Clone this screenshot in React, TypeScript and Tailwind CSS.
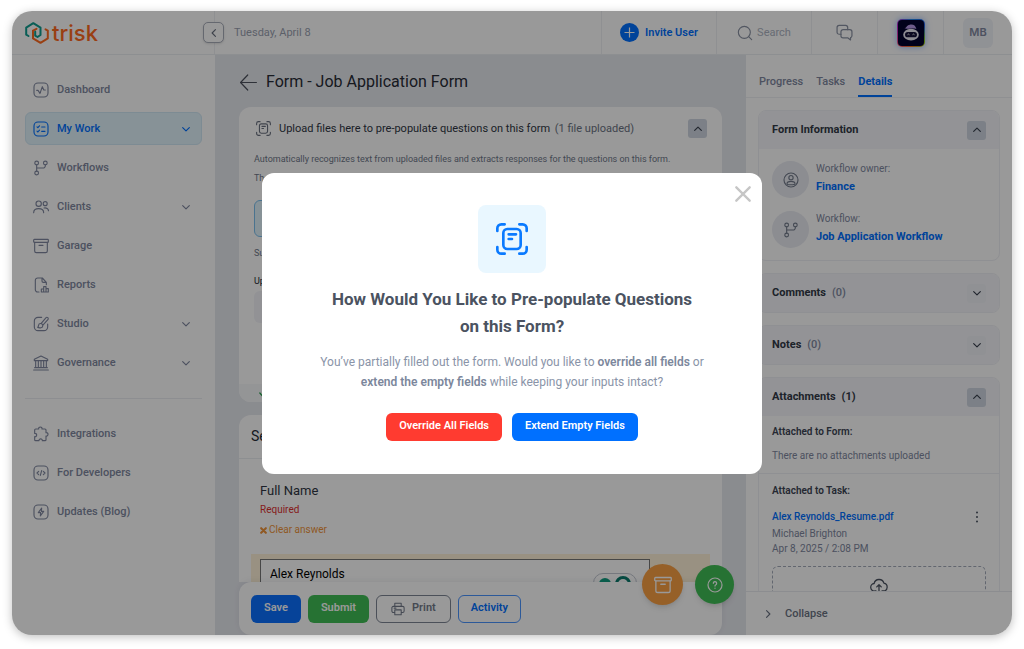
import React from "react";

type IconProps = { className?: string };

function Svg({ className = "", width = 1.7, children }: { className?: string; width?: number; children: React.ReactNode }) {
  return (
    <svg viewBox="0 0 24 24" fill="none" stroke="currentColor" strokeWidth={width} strokeLinecap="round" strokeLinejoin="round" className={className} aria-hidden="true">
      {children}
    </svg>
  );
}

const Frame = () => <rect x="1.5" y="1.5" width="21" height="21" rx="6" />;

const DashboardIcon = ({ className }: IconProps) => (
  <Svg className={className}><Frame /><path d="M5.5 12.500h2L10.500 17l3.500-10 2.200 5h2.300" /></Svg>
);
const WorkIcon = ({ className }: IconProps) => (
  <Svg className={className}><Frame /><path d="M6 8.8l1.3 1.2 2.4-2.8M6 15.3l1.3 1.2 2.4-2.8M13 9h5M13 15.5h5" /></Svg>
);
const BranchIcon = ({ className }: IconProps) => (
  <Svg className={className}>
    <circle cx="5.5" cy="4.5" r="2.8" /><circle cx="5.5" cy="19.5" r="2.8" /><circle cx="18.5" cy="4.5" r="2.8" />
    <path d="M5.5 7.3v9.4M18.5 7.3v1.2a3.5 3.5 0 0 1-3.5 3.5H5.5" />
  </Svg>
);
const ClientsIcon = ({ className }: IconProps) => (
  <Svg className={className}>
    <circle cx="8.5" cy="7" r="4" /><circle cx="18.3" cy="7" r="3" />
    <path d="M1 20.5c0-4 2.600-6 7.500-6s7.500 2 7.500 6M16.500 13.500c4-.6 6.500 1 6.700 4" />
  </Svg>
);
const BoxIcon = ({ className }: IconProps) => (
  <Svg className={className}>
    <rect x="1" y="2" width="22" height="4.500" rx="1" /><path d="M2.500 6.500v13a2.500 2.500 0 0 0 2.500 2.500h14a2.500 2.500 0 0 0 2.500-2.500v-13M9 11h6" />
  </Svg>
);
const ReportIcon = ({ className }: IconProps) => (
  <Svg className={className}>
    <path d="M9 22.500H7A3.500 3.500 0 0 1 3.500 19V5A3.500 3.500 0 0 1 7 1.500h7L20 8v3.500M13.500 1.500V6a2 2 0 0 0 2 2H20M12.500 22.500v-4.500h3.500v4.500M16 22.500v-8h3.500v8M19.500 22.500v-5H23v5zM12.500 22.500H23" />
  </Svg>
);
const StudioIcon = ({ className }: IconProps) => (
  <Svg className={className}>
    <path d="M13 2H7.500A5.500 5.500 0 0 0 2 7.500v9A5.500 5.500 0 0 0 7.500 22h9a5.500 5.500 0 0 0 5.500-5.500V12" />
    <path d="M12 11.500l7.300-8.800a2 2 0 0 1 3 2.700L14.500 14M7 17c1.200-.6 1-1.700 1.300-3a3.200 3.200 0 1 1 3.700 3.600c-1.500.4-3.500.3-5-.6z" />
  </Svg>
);
const BankIcon = ({ className }: IconProps) => (
  <Svg className={className}>
    <path d="M2 8.500V6.500L12 1.500l10 5v2zM4 8.500v10.500M8 8.500v10.500M12 8.500v10.500M16 8.500v10.500M20 8.500v10.500M2.500 19h19M1 22.500h22" />
  </Svg>
);
const PuzzleIcon = ({ className }: IconProps) => (
  <Svg className={className}>
    <path d="M4 4.500h4.500c-.8-4 5.800-4 5 0h4.500a1.500 1.500 0 0 1 1.500 1.500v4c4-1 4 6 0 5v5.500a1.500 1.500 0 0 1-1.500 1.500h-4c.3-3.500-5.300-3.500-5 0H4a1.500 1.500 0 0 1-1.500-1.500V16c4 .6 4-5.500 0-5V6A1.500 1.500 0 0 1 4 4.500z" />
  </Svg>
);
const CodeIcon = ({ className }: IconProps) => (
  <Svg className={className}><Frame /><path d="M8.500 9.500L6 12l2.500 2.500M15.500 9.500L18 12l-2.500 2.500M13 8.500l-2 7" /></Svg>
);
const BoltIcon = ({ className }: IconProps) => (
  <Svg className={className}><Frame /><path d="M13 6l-5 7h3.500L11 18l5-7h-3.500z" /></Svg>
);
const ScanIcon = ({ className, width = 2 }: IconProps & { width?: number }) => (
  <Svg className={className} width={width}>
    <path d="M1 6V4a3 3 0 0 1 3-3h2.500M17.500 1H20a3 3 0 0 1 3 3v2M23 18v2a3 3 0 0 1-3 3h-2.500M6.500 23H4a3 3 0 0 1-3-3v-2" />
    <rect x="5.500" y="4.500" width="13" height="15" rx="3" /><path d="M9.500 8.500h5.500M9.500 12h2.500" />
  </Svg>
);
const Chevron = ({ className = "" }: IconProps) => (
  <Svg className={className} width={2.800}><path d="M4 8.500l8 8 8-8" /></Svg>
);
const PersonIcon = ({ className }: IconProps) => (
  <Svg className={className}><circle cx="12" cy="12" r="10.500" /><circle cx="12" cy="8.500" r="3.200" /><path d="M6 17.500c0-2.500 2.500-3.500 6-3.500s6 1 6 3.500-12 2-12 0z" /></Svg>
);

function Logo() {
  return (
    <a href="#home" className="flex items-center gap-[3px] text-[#ff6a1f]">
      <svg viewBox="0 0 24 22" fill="none" strokeWidth="2" strokeLinecap="round" strokeLinejoin="round" className="h-[22px] w-6" aria-hidden="true">
        <path d="M3.500 14L1.200 12.700V5.600L8.300 1.200l7.200 4.400v7.400l-3 2-2.300-1.400V9.500" stroke="#0f9d8f" />
        <path d="M11.500 6.800L8 8.600v7.800l7.500 4.400 7.300-4.400V8.600L20.500 7.300" stroke="currentColor" />
      </svg>
      <span className="font-[Inter] text-[22px] leading-6 font-medium">trisk</span>
    </a>
  );
}

type NavEntry = { label: string; Icon: React.ComponentType<IconProps>; expandable?: boolean; active?: boolean };

const mainNav: NavEntry[] = [
  { label: "Dashboard", Icon: DashboardIcon },
  { label: "My Work", Icon: WorkIcon, expandable: true, active: true },
  { label: "Workflows", Icon: BranchIcon },
  { label: "Clients", Icon: ClientsIcon, expandable: true },
  { label: "Garage", Icon: BoxIcon },
  { label: "Reports", Icon: ReportIcon },
  { label: "Studio", Icon: StudioIcon, expandable: true },
  { label: "Governance", Icon: BankIcon, expandable: true },
];
const extraNav: NavEntry[] = [
  { label: "Integrations", Icon: PuzzleIcon },
  { label: "For Developers", Icon: CodeIcon },
  { label: "Updates (Blog)", Icon: BoltIcon },
];

function NavList({ items }: { items: NavEntry[] }) {
  return (
    <ul className="flex flex-col gap-1.5">
      {items.map(({ label, Icon, expandable, active }) => (
        <li key={label}>
          <a
            href="#nav"
            className={
              active
                ? "flex h-[33px] items-center gap-2 rounded-md border border-[#d0e8f5] bg-[#e2f3fc] px-[7px] text-[#0070ff]"
                : "flex h-[33px] items-center gap-2 rounded-md border border-transparent px-[7px] text-[#8088a0]"
            }
          >
            <Icon className="size-4" />
            <span className="flex-1 pt-px text-[11px] font-medium">{label}</span>
            {expandable && <Chevron className="mr-[3px] size-2.5" />}
          </a>
        </li>
      ))}
    </ul>
  );
}

function Sidebar() {
  return (
    <nav className="w-[203px] shrink-0 px-[13px] pt-[18px]">
      <NavList items={mainNav} />
      <hr className="mt-[19px] mb-[18px] border-[#ebedf2]" />
      <NavList items={extraNav} />
    </nav>
  );
}

function Header() {
  const cell = "flex h-full items-center justify-center border-l border-[#eff0f4]";
  return (
    <header className="flex h-[44px] shrink-0 items-center border-b border-[#eceef2]">
      <div className="flex h-full w-[203px] shrink-0 items-center border-r border-[#eff0f4] pl-[13px]">
        <Logo />
        <button aria-label="Collapse menu" className="relative -right-[10px] ml-auto flex size-[21px] shrink-0 items-center justify-center rounded-[5px] border border-[#a8adba] bg-white text-[#6b7280] shadow-sm">
          <Chevron className="size-2.5 rotate-90" />
        </button>
      </div>
      <span className="flex-1 pt-px pl-[19px] text-[11px] text-[#9aa1b0]">Tuesday, April 8</span>
      <button className={`${cell} w-[115px] gap-1.5 text-[#0070ff]`}>
        <svg viewBox="0 0 19 19" className="size-[19px]" aria-hidden="true">
          <circle cx="9.500" cy="9.500" r="9.500" fill="#0070ff" /><path d="M9.500 4.500v10M4.500 9.500h10" stroke="#fff" strokeWidth="1.200" />
        </svg>
        <span className="pt-px text-[11px] font-semibold">Invite User</span>
      </button>
      <button className={`${cell} w-[95px] gap-1 text-[#8a92a3]`}>
        <Svg className="size-4"><circle cx="11" cy="11" r="9" /><path d="M17.500 17.500L22 22" /></Svg>
        <span className="pt-px text-[11px] text-[#adb4c2]">Search</span>
      </button>
      <button aria-label="Messages" className={`${cell} w-[66px] text-[#8a92a3]`}>
        <Svg className="size-[17px]">
          <path d="M7 14.500H4.500a3 3 0 0 1-3-3V5a3 3 0 0 1 3-3h9a3 3 0 0 1 3 3v3" />
          <path d="M10 8h9.500a3 3 0 0 1 3 3v5.500a3 3 0 0 1-2 2.800V22.500l-4-3H10a3 3 0 0 1-3-3V11a3 3 0 0 1 3-3z" />
        </Svg>
      </button>
      <button aria-label="Assistant" className={`${cell} w-[66px]`}>
        <span className="flex size-7 items-center justify-center rounded-[5px] bg-[conic-gradient(#2389e8,#2563eb,#84cc16,#f97316,#ec4899,#c026d3,#2389e8)] p-px shadow-[0_0_6px_#4f8cff99]">
          <svg viewBox="0 0 24 24" className="size-full rounded-[4px] bg-[#03022e]" aria-hidden="true">
            <ellipse cx="12" cy="13.500" rx="7.200" ry="5.500" fill="#ece9f6" />
            <rect x="6.500" y="11" width="11" height="5" rx="2.500" fill="#15123a" />
            <path d="M8.800 13.600q.9-1.200 1.800 0M13.400 13.600q.9-1.200 1.800 0" stroke="#fff" strokeWidth=".8" fill="none" />
            <path d="M6 7.500C8.500 7 7.500 4.700 11 4.300c3.500-.4 5 .8 6 4-3-1-7 .3-11-.8z" fill="#b79ae8" />
          </svg>
        </span>
      </button>
      <button className={`${cell} w-[69px]`}>
        <span className="flex size-[30px] items-center justify-center rounded-md bg-[#f1f3f8] font-[Inter] text-[11px] font-semibold text-[#8088a0]">MB</span>
      </button>
    </header>
  );
}

function Toggle({ open = false, label }: { open?: boolean; label: string }) {
  return (
    <button
      aria-label={label}
      aria-expanded={open}
      className={
        open
          ? "flex size-[19px] shrink-0 items-center justify-center rounded-[3px] bg-[#cfd6e1] text-[#39414f]"
          : "flex size-[19px] shrink-0 items-center justify-center rounded-[3px] bg-[#f1f2f7] text-[#39414f]"
      }
    >
      <Chevron className={open ? "size-2.5 rotate-180" : "size-2.5"} />
    </button>
  );
}

function FormArea() {
  return (
    <main className="relative flex min-w-0 flex-1 flex-col bg-[#e7e9ef] px-6">
      <div className="flex min-h-0 flex-1 flex-col overflow-hidden">
        <div className="flex h-[52px] shrink-0 items-center gap-2 pt-0.5">
          <Svg className="size-[19px] text-[#4d535e]" width={1.500}><path d="M22 12H2M11 2.500L2 12l9 9.500" /></Svg>
          <h1 className="text-[16px] text-[#272c36]">Form - Job Application Form</h1>
        </div>

        <section className="flex h-[295px] shrink-0 flex-col overflow-hidden rounded-xl bg-white">
          <div className="flex items-center gap-2 pt-3 pr-[15px] pl-[17px]">
            <ScanIcon className="size-[15px] text-[#6b7280]" width={1.800} />
            <h2 className="flex-1 pt-px text-[11px] text-[#2f3643]">
              Upload files here to pre-populate questions on this form{" "}
              <span className="ml-0.5 text-[#6b7383]">(1 file uploaded)</span>
            </h2>
            <Toggle open label="Upload section" />
          </div>
          <div className="flex-1 px-[15px] pt-3 text-[9px] leading-[19px] text-[#6f788a]">
            <p className="whitespace-nowrap">Automatically recognizes text from uploaded files and extracts responses for the questions on this form.</p>
            <p>The</p>
            <div className="mt-3 h-[37px] rounded-md border border-[#7cc0ee] bg-[#e2f3fc]" />
            <p className="mt-[7px]">Supported</p>
            <p className="mt-[9px] text-[#272c36]">Uploaded</p>
            <div className="h-8 rounded-md bg-[#f3f4f8]" />
          </div>
          <div className="flex h-[18px] items-center bg-[#f7f8fa] pl-5 text-[#22a04a]">
            <Svg className="size-2.5" width={3}><path d="M2 12l7 8L22 5" /></Svg>
          </div>
        </section>

        <section className="mt-[13px] flex-1 overflow-hidden rounded-t-xl bg-white">
          <h2 className="flex h-[44px] items-center border-b border-[#eceef2] px-3 text-[14px] text-[#272c36]">Section</h2>
          <div className="px-[21px] pt-[22px]">
            <label htmlFor="full-name" className="block text-[13px] leading-5 text-[#2f3643]">Full Name</label>
            <p className="text-[10px] leading-[17px] text-[#e03131]">Required</p>
            <button className="mt-1 flex items-center gap-0.5 text-[10px] leading-4 text-[#f0943a]">
              <Svg className="size-[7px]" width={7}><path d="M4 4l16 16M20 4L4 20" /></Svg>
              Clear answer
            </button>
          </div>
          <div className="mx-3 mt-4 bg-[#fff2d9] px-[9px] pt-[5px] pb-5">
            <div className="mr-[51px] flex h-[40px] items-start border border-[#777] bg-white pt-1 pr-3 pl-[9px]">
              <input id="full-name" defaultValue="Alex Reynolds" className="h-5 min-w-0 flex-1 bg-transparent text-[12px] text-black outline-none" />
              <span className="mt-[9px] flex h-5 items-start gap-1 rounded-full border border-[#c3c8d2] bg-white px-[5px] pt-1">
                <span className="size-3 rounded-full bg-[#0f9d7f]" />
                <span className="-mt-0.5 size-4 rounded-full border-[3px] border-[#0b7d6e]" />
              </span>
            </div>
          </div>
        </section>
      </div>

      <div className="z-0 flex h-[53px] shrink-0 items-center gap-[7px] rounded-xl bg-white px-3 text-[11px] font-semibold shadow-[0_-1px_6px_rgba(40,50,80,0.08)]">
        <button className="h-7 rounded-md bg-[#0a70ff] px-[13px] text-white">Save</button>
        <button className="h-7 rounded-md bg-[#40bf56] px-[13px] text-white">Submit</button>
        <button className="flex h-7 items-center gap-[7px] rounded-md border border-[#7d8594] px-[14px] text-[#737b8b]">
          <Svg className="size-[14px]" width={1.800}>
            <path d="M6.500 7.500V2h11v5.500M6 18H4a2.500 2.500 0 0 1-2.500-2.500v-5.500A2.500 2.500 0 0 1 4 7.500h16a2.500 2.500 0 0 1 2.500 2.500v5.500A2.500 2.500 0 0 1 20 18h-2M6.500 13.500h11V22h-11zM5.500 10.500h3" />
          </Svg>
          Print
        </button>
        <button className="h-7 rounded-md border border-[#4a94ff] px-3 text-[#0070ff]">Activity</button>
      </div>

      <div className="absolute right-3 bottom-[30px] z-10 flex items-center gap-3">
        <button aria-label="Open garage" className="flex size-[41px] items-center justify-center rounded-full bg-[#fba044] text-white shadow-md">
          <BoxIcon className="size-[18px]" />
        </button>
        <button aria-label="Help" className="flex size-[39px] items-center justify-center rounded-full bg-[#40bf56] text-white shadow-md">
          <Svg className="size-4" width={1.800}><circle cx="12" cy="12" r="10.500" /><path d="M9.500 9.500a2.500 2.500 0 1 1 3.800 2.100c-.9.500-1.300 1-1.300 2M12 16.800v.2" /></Svg>
        </button>
      </div>
    </main>
  );
}

function InfoRow({ Icon, caption, value }: { Icon: React.ComponentType<IconProps>; caption: string; value: string }) {
  return (
    <div className="flex h-[37px] items-center gap-[7px]">
      <span className="flex size-[37px] items-center justify-center rounded-full bg-[#e9ebf2] text-[#737b8b]"><Icon className="size-4" /></span>
      <div className="pb-1 leading-[18px]">
        <p className="text-[10px] text-[#8088a0]">{caption}</p>
        <a href="#owner" className="block text-[11px] font-bold text-[#0070ff]">{value}</a>
      </div>
    </div>
  );
}

function PanelHead({ title, count, strong, open }: { title: string; count?: string; strong?: boolean; open?: boolean }) {
  return (
    <h2 className="flex h-[38px] items-center justify-between bg-[#f5f6fa] px-[13px] text-[11px] font-bold text-[#323946]">
      <span>
        {title}
        {count && <span className={strong ? "ml-1.5" : "ml-1.5 font-medium text-[#8088a0]"}>{count}</span>}
      </span>
      <Toggle open={open} label={title} />
    </h2>
  );
}

function DetailsPanel() {
  const card = "shrink-0 overflow-hidden rounded-lg border border-[#eff0f5]";
  return (
    <aside className="flex w-[266px] shrink-0 flex-col bg-white">
      <div className="flex h-[43px] shrink-0 items-end gap-[13px] border-b border-[#eff0f4] pl-[13px] text-[11px] font-medium text-[#8088a0]">
        <button className="h-[31px] border-b-2 border-transparent pt-1">Progress</button>
        <button className="h-[31px] border-b-2 border-transparent pt-1">Tasks</button>
        <button className="h-[31px] border-b-2 border-[#0070ff] pt-1 font-bold text-[#0070ff]">Details</button>
      </div>
      <div className="flex min-h-0 flex-1 flex-col gap-3 overflow-hidden px-3 pt-3">
        <section className={card}>
          <PanelHead title="Form Information" open />
          <div className="flex flex-col gap-[13px] px-[13px] pt-3 pb-3">
            <InfoRow Icon={PersonIcon} caption="Workflow owner:" value="Finance" />
            <InfoRow Icon={BranchIcon} caption="Workflow:" value="Job Application Workflow" />
          </div>
        </section>
        <section className={card}><PanelHead title="Comments" count="(0)" /></section>
        <section className={card}><PanelHead title="Notes" count="(0)" /></section>
        <section className={card}>
          <PanelHead title="Attachments" count="(1)" strong open />
          <div className="px-[13px] pt-1.5 pb-[7px] text-[#8088a0]">
            <h3 className="text-[10px] leading-5 font-semibold text-[#3d4554]">Attached to Form:</h3>
            <p className="mt-1 text-[10px] leading-5">There are no attachments uploaded</p>
          </div>
          <div className="border-t border-[#eff0f5] px-[13px] pt-[7px] text-[#8088a0]">
            <h3 className="text-[10px] leading-5 font-semibold text-[#3d4554]">Attached to Task:</h3>
            <div className="mt-[7px] flex items-center justify-between">
              <a href="#file" className="text-[10px] leading-[18px] font-medium text-[#0070ff]">Alex Reynolds_Resume.pdf</a>
              <button aria-label="File actions" className="flex w-[19px] justify-center text-[#4b5361]">
                <Svg className="size-3" width={4}><path d="M12 3v.1M12 12v.1M12 21v.1" /></Svg>
              </button>
            </div>
            <p className="text-[10px] leading-[15px]">Michael Brighton</p>
            <p className="text-[10px] leading-[15px]">Apr 8, 2025 / 2:08 PM</p>
            <button aria-label="Upload attachment" className="mt-2.5 flex h-20 w-full justify-center rounded-md border border-dashed border-[#a4abba] pt-[9px] text-[#4b5361]">
              <Svg className="size-[18px]" width={1.700}><path d="M8 20H6.500A5 5 0 0 1 5.500 10a6.700 6.700 0 0 1 13-.5A5.300 5.300 0 0 1 18 20h-2M12 20v-8M9 14.500l3-3 3 3" /></Svg>
            </button>
          </div>
        </section>
      </div>
      <button className="flex h-[44px] shrink-0 items-center gap-3 border-t border-[#e9ebf0] pl-[17px] text-[11px] font-medium text-[#6b7383]">
        <Chevron className="size-2.5 -rotate-90" />
        <span className="pt-px">Collapse</span>
      </button>
    </aside>
  );
}

function PrepopulateDialog() {
  return (
    <div className="absolute inset-0 z-20 flex items-center justify-center bg-black/40">
      <div role="dialog" aria-modal="true" aria-labelledby="dialog-title" className="relative flex w-[500px] max-w-full flex-col items-center rounded-xl bg-white px-12 pt-8 pb-[33px] text-center">
        <button aria-label="Close" className="absolute top-[13px] right-[11px] text-[#c6c6c6]">
          <Svg className="size-4" width={3.500}><path d="M2 2l20 20M22 2L2 22" /></Svg>
        </button>
        <span className="flex size-[68px] items-center justify-center rounded-lg bg-[#e9f7ff] text-[#0a7aff]">
          <ScanIcon className="size-8" />
        </span>
        <h2 id="dialog-title" className="mt-[13px] max-w-[380px] text-[17px] leading-[27px] font-bold text-[#4b5361]">
          How Would You Like to Pre-populate Questions on this Form?
        </h2>
        <p className="mt-3 text-[12px] leading-5 text-[#8a94a8]">
          You’ve partially filled out the form. Would you like to <strong className="font-semibold text-[#7c879c]">override all fields</strong> or{" "}
          <strong className="font-semibold text-[#7c879c]">extend the empty fields</strong> while keeping your inputs intact?
        </p>
        <div className="mt-[21px] flex gap-2.5 text-[11px] font-semibold text-white">
          <button className="h-7 rounded-md bg-[#ff3b30] px-[13px]">Override All Fields</button>
          <button className="h-7 rounded-md bg-[#0070ff] px-[13px]">Extend Empty Fields</button>
        </div>
      </div>
    </div>
  );
}

export default function App() {
  return (
    <div className="h-screen bg-white px-3 pt-[11px] pb-[14px] font-[Roboto,sans-serif]">
      <div className="relative flex h-full flex-col overflow-hidden rounded-[20px] bg-white shadow-[0_2px_10px_rgba(0,0,0,0.25)]">
        <Header />
        <div className="flex min-h-0 flex-1">
          <Sidebar />
          <FormArea />
          <DetailsPanel />
        </div>
        <PrepopulateDialog />
      </div>
    </div>
  );
}
